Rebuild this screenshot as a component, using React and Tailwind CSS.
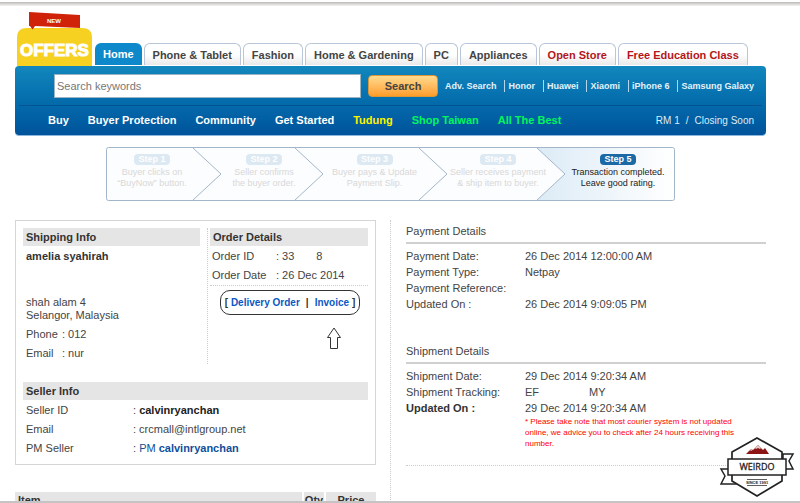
const tabs = ['Phone & Tablet', 'Fashion', 'Home & Gardening', 'PC', 'Appliances'];
const hotTabs = ['Open Store', 'Free Education Class'];
const keywords = ['Honor', 'Huawei', 'Xiaomi', 'iPhone 6', 'Samsung Galaxy'];

const navLinks = [
  { label: 'Buy', color: 'text-white' },
  { label: 'Buyer Protection', color: 'text-white' },
  { label: 'Community', color: 'text-white' },
  { label: 'Get Started', color: 'text-white' },
  { label: 'Tudung', color: 'text-[#fff200]' },
  { label: 'Shop Taiwan', color: 'text-[#00f65c]' },
  { label: 'All The Best', color: 'text-[#00f65c]' },
];

const steps = [
  { title: 'Step 1', lines: ['Buyer clicks on', '“BuyNow” button.'] },
  { title: 'Step 2', lines: ['Seller confirms', 'the buyer order.'] },
  { title: 'Step 3', lines: ['Buyer pays & Update', 'Payment Slip.'] },
  { title: 'Step 4', lines: ['Seller receives payment', '& ship item to buyer.'] },
  { title: 'Step 5', lines: ['Transaction completed.', 'Leave good rating.'] },
];

const tabClasses = "h-[22px] rounded-t-md border border-b-0 border-[#b9c5d8] bg-gradient-to-b from-white from-50% to-[#e9e9e9] px-2 leading-[23px]";
const barClasses = "bg-[#e5e5e5] px-[3px] text-[11px] leading-[18px] font-bold text-[#333]";
const sectionClasses = "border-b-2 border-[#d0d0d0] pb-[3px] leading-4";

function OffersBadge() {
  return (
    <a href="#offers" aria-label="New offers" className="mr-[3px] ml-0.5 block">
      <svg width="75" height="54" viewBox="0 0 75 54" className="block">
        <path d="M0 54V25Q0 16 10 16H65Q75 16 75 25V54Z" fill="#f6d122" />
        <path d="M12 0L63 3V16L18 14L15.500 17.500L13 14H12Z" fill="#cf2209" />
        <text x="37" y="11" textAnchor="middle" fontSize="6" fontWeight="bold" fill="#fff" fontFamily="'Liberation Sans', sans-serif">NEW</text>
        <text x="37.500" y="44" textAnchor="middle" fontSize="17" fontWeight="bold" fill="#fff" stroke="#fff" strokeWidth="1" fontFamily="'Liberation Sans', sans-serif">OFFERS</text>
      </svg>
    </a>
  );
}

function WeirdoLogo() {
  return (
    <svg width="76" height="62" viewBox="0 0 76 62" role="img" aria-label="Weirdo" className="absolute right-[5px] bottom-[3px]">
      <path d="M12 33H2L6 40L2 48H17V42M64 29V18H74L70 25L74 33H64" fill="#fff" stroke="#222" strokeWidth="1.500" />
      <path d="M38 2L63 16V45L38 60L13 45V16Z" fill="#fff" stroke="#222" strokeWidth="1.700" />
      <path d="M27 18L32 13L34 14L39 9L44 14L46 12L50 18Z" fill="#8d1414" />
      <path d="M36 12L39 9L42 12L41 13L39 12L37 13ZM31 14L32 13L33.500 14L32 15Z" fill="#e9c9c4" />
      <rect x="9" y="23" width="58" height="16" fill="#fff" stroke="#222" strokeWidth="1.500" />
      <text x="38" y="34" textAnchor="middle" fontSize="9" fill="#222" stroke="#222" strokeWidth=".3" fontFamily="'Open Sans', sans-serif">WEIRDO</text>
      <path d="M28 43.500H48M28 49.500H48" stroke="#333" strokeWidth=".8" />
      <text x="38" y="48" textAnchor="middle" fontSize="4" fontWeight="bold" fill="#222" fontFamily="'Liberation Sans', sans-serif">SINCE 1991</text>
    </svg>
  );
}

function Header() {
  return (
    <header>
      <div className="flex items-end">
        <OffersBadge />
        <nav aria-label="Categories" className="mb-px flex gap-0.5 text-[11px] font-bold whitespace-nowrap text-[#444]">
          <a href="#home" className="h-[22px] rounded-t-md bg-[#0d89cb] px-2 leading-[23px] text-white">Home</a>
          {tabs.map((tab) => (
            <a key={tab} href="#tab" className={tabClasses}>{tab}</a>
          ))}
          {hotTabs.map((tab) => (
            <a key={tab} href="#tab" className={`${tabClasses} text-[#b3161b]`}>{tab}</a>
          ))}
        </nav>
      </div>

      <div className="rounded bg-gradient-to-b from-[#1287bd] to-[#00539b] px-1 shadow-[0_1px_0_#8bb8dc]">
        {/* Search */}
        <form className="flex items-center border-b border-[#005490] pt-2 pr-2 pb-[7px] pl-[35px]">
          <input type="text" aria-label="Search keywords" placeholder="Search keywords" className="h-6 min-w-0 flex-1 border border-[#9bb4c4] bg-white px-0.5 text-[11px] placeholder:text-[#777]" />
          <button type="button" className="mx-[7px] h-[22px] w-[70px] rounded-sm border border-[#d9973a] bg-gradient-to-b from-[#ffdb8c] to-[#ff9d27] text-[11px] font-bold text-[#444]">Search</button>
          <div className="flex items-center text-[9px] leading-3 font-bold whitespace-nowrap text-[#e3f2fa]">
            <a href="#advanced" className="mr-2">Adv. Search</a>
            {keywords.map((word) => (
              <a key={word} href="#keyword" className="mr-2 border-l border-[#b5d6e8] pl-[3px] last:mr-0">{word}</a>
            ))}
          </div>
        </form>

        {/* Main menu */}
        <nav aria-label="Main" className="flex h-[29px] items-center gap-[19px] pr-2 pl-[29px] text-[11px] font-bold whitespace-nowrap">
          {navLinks.map((link) => (
            <a key={link.label} href="#menu" className={link.color}>{link.label}</a>
          ))}
          <span className="ml-auto flex gap-1.5 text-[10px] font-normal text-[#dcecf7]">
            <a href="#rm1">RM 1</a>
            <span>/</span>
            <a href="#closing">Closing Soon</a>
          </span>
        </nav>
      </div>
    </header>
  );
}

function Steps() {
  return (
    <div className="relative mx-[91px] mt-3 h-[54px]">
      <svg viewBox="0 0 569 54" preserveAspectRatio="none" className="absolute inset-0 h-full w-full" aria-hidden="true">
        <defs>
          <linearGradient id="active">
            <stop offset="0" stopColor="#dcebf6" />
            <stop offset="1" stopColor="#fff" />
          </linearGradient>
        </defs>
        <rect x=".5" y=".5" width="568" height="53" rx="2" fill="#fcfdfe" />
        <path d="M431 1H568V53H431L459 27Z" fill="url(#active)" />
        <g fill="none" stroke="#a3b6c9" strokeWidth="1">
          <rect x=".5" y=".5" width="568" height="53" rx="2" />
          <path d="M87 1L115 27L87 53M189 1L217 27L189 53M313 1L341 27L313 53M431 1L459 27L431 53" />
        </g>
      </svg>
      <ol className="relative grid grid-cols-[92fr_132fr_89fr_142fr_114fr] pt-[7px] text-center text-[9px] leading-[11px] whitespace-nowrap">
        {steps.map((step, idx) => {
          const active = idx === steps.length - 1;
          return (
            <li key={step.title} className={`flex flex-col items-center ${active ? 'text-[#222]' : 'text-[#d8d8d8]'} ${idx === 3 ? 'pl-4' : ''}`}>
              <span className={`mb-0.5 w-9 rounded-sm font-bold text-white ${active ? 'bg-[#1b6aa5]' : 'bg-[#dce9f2]'}`}>{step.title}</span>
              {step.lines.map((line) => (
                <span key={line}>{line}</span>
              ))}
            </li>
          );
        })}
      </ol>
    </div>
  );
}

function OrderPanel() {
  return (
    <section className="border border-[#d5d5d5] px-[7px] pt-[7px] pb-1.5 leading-[13px]">
      <div className="grid grid-cols-[177fr_168fr]">
        {/* Shipping Info */}
        <div>
          <h2 className={barClasses}>Shipping Info</h2>
          <div className="px-[3px] pt-1">
            <p className="font-bold text-[#333]">amelia syahirah</p>
            <p className="mt-[33px]">shah alam 4</p>
            <p>Selangor, Malaysia</p>
            <dl className="mt-1.5 grid grid-cols-[36px_1fr] gap-y-1.5">
              <dt>Phone</dt>
              <dd>: 012</dd>
              <dt>Email</dt>
              <dd>: nur</dd>
            </dl>
          </div>
        </div>

        {/* Order Details */}
        <div className="ml-[7px] h-[136px] border-l border-dotted border-[#ccc] pl-0.5">
          <h2 className={barClasses}>Order Details</h2>
          <dl className="grid grid-cols-[64px_1fr] gap-y-1.5 border-b border-dotted border-[#ccc] px-0.5 pt-1 pb-[3px]">
            <dt>Order ID</dt>
            <dd className="flex gap-[22px]"><span>: 33</span><span>8</span></dd>
            <dt>Order Date</dt>
            <dd>: 26 Dec 2014</dd>
          </dl>
          <div className="mr-2 ml-2.5 mt-1 flex h-[25px] items-center justify-center gap-1.5 rounded-[10px] border border-[#333] text-[10px] font-bold whitespace-nowrap text-[#333]">
            <span>[ <a href="#delivery" className="text-[#0b57c4]">Delivery Order</a></span>
            <span>|</span>
            <span><a href="#invoice" className="text-[#0b57c4]">Invoice</a> ]</span>
          </div>
          <svg width="14" height="22" viewBox="0 0 14 22" className="mt-3 mr-[27px] ml-auto" aria-hidden="true">
            <path d="M7 1L13.500 10.500H10.500V21.500H3.500V10.500H.5Z" fill="#fff" stroke="#333" />
          </svg>
        </div>
      </div>

      {/* Seller Info */}
      <h2 className={`${barClasses} mt-[18px]`}>Seller Info</h2>
      <dl className="grid grid-cols-[107px_1fr] gap-y-1.5 px-[3px] pt-1 pb-[3px]">
        <dt>Seller ID</dt>
        <dd>: <b className="text-[#222]">calvinryanchan</b></dd>
        <dt>Email</dt>
        <dd>: crcmall@intlgroup.net</dd>
        <dt>PM Seller</dt>
        <dd>: <a href="#pm" className="text-[#0f4f9c]">PM <b>calvinryanchan</b></a></dd>
      </dl>
    </section>
  );
}

function PaymentAndShipment() {
  return (
    <div className="ml-[14px] border-l border-dotted border-[#ccc] pt-[3px] pl-[15px] leading-4">
      <h2 className={sectionClasses}>Payment Details</h2>
      <dl className="grid grid-cols-[119px_1fr] pt-1">
        <dt>Payment Date:</dt>
        <dd>26 Dec 2014 12:00:00 AM</dd>
        <dt>Payment Type:</dt>
        <dd>Netpay</dd>
        <dt>Payment Reference:</dt>
        <dd></dd>
        <dt>Updated On :</dt>
        <dd>26 Dec 2014 9:09:05 PM</dd>
      </dl>

      <h2 className={`${sectionClasses} mt-[31px]`}>Shipment Details</h2>
      <dl className="grid grid-cols-[119px_1fr] border-b border-dotted border-[#ccc] pt-1 pb-4">
        <dt>Shipment Date:</dt>
        <dd>29 Dec 2014 9:20:34 AM</dd>
        <dt>Shipment Tracking:</dt>
        <dd className="flex gap-[50px]"><span>EF</span><span>MY</span></dd>
        <dt className="font-bold text-[#333]">Updated On :</dt>
        <dd>
          29 Dec 2014 9:20:34 AM
          <p className="pr-4 text-[8px] leading-[11px] text-[#ff0000]">* Please take note that most courier system is not updated online, we advice you to check after 24 hours receiving this number.</p>
        </dd>
      </dl>
    </div>
  );
}

export default function App() {
  return (
    <div className="relative flex h-screen flex-col overflow-hidden border-b-2 border-[#c4c4c4] bg-white font-['Liberation_Sans',Arial,sans-serif] text-[11px] text-[#444]">
      <div className="mt-0.5 h-1 shrink-0 bg-gradient-to-b from-[#bdbab9] to-[#f4f4f4]" />
      <main className="min-h-0 flex-1 overflow-hidden pt-1.5 pr-[34px] pl-[15px]">
        <Header />
        <Steps />
        <div className="mt-[19px] grid grid-cols-[361fr_390fr]">
          <div>
            <OrderPanel />
            <table className="mt-[27px] w-full text-[11px] leading-4 text-[#333]">
              <thead>
                <tr className="bg-[#e5e5e5]">
                  <th className="px-[3px] text-left">Item</th>
                  <th className="w-[22px] border-l-2 border-white">Qty</th>
                  <th className="w-[51px] border-l-2 border-white">Price</th>
                </tr>
              </thead>
            </table>
          </div>
          <PaymentAndShipment />
        </div>
      </main>
      <WeirdoLogo />
    </div>
  );
}
